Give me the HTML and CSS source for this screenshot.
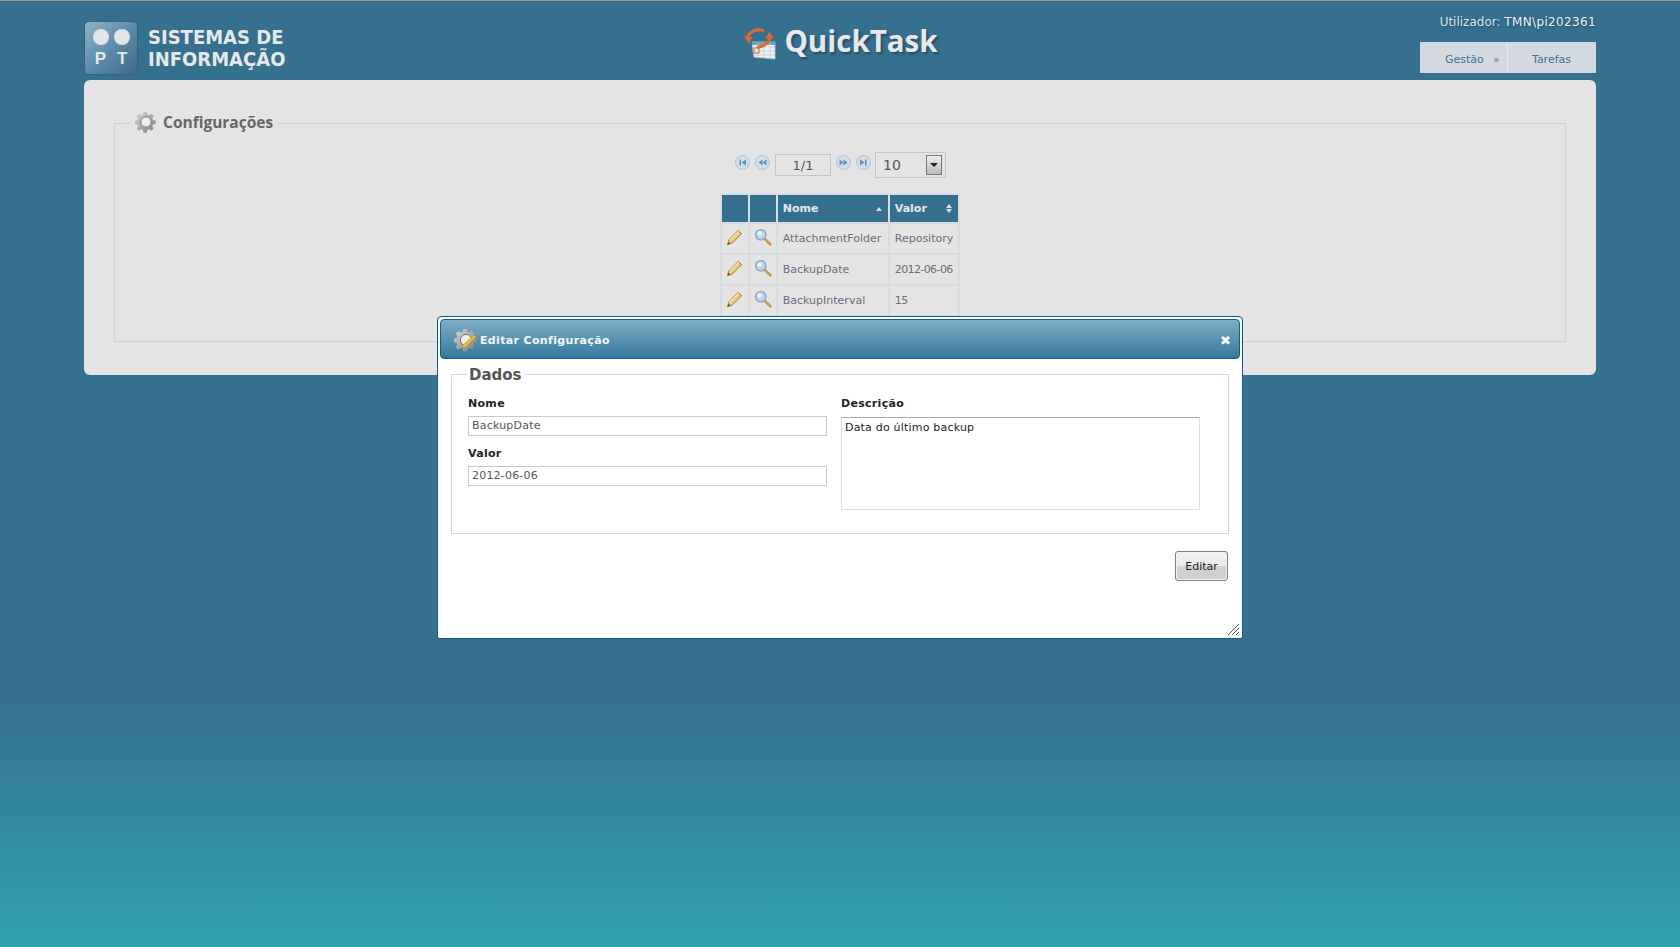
FILE: index.html
```html
<!DOCTYPE html>
<html lang="pt">
<head>
  <meta charset="UTF-8" />
  <title>QuickTask</title>
  <link rel="stylesheet" href="styles.css">
</head>
<body>
  <svg class="defs" width="0" height="0">
    <defs>
      <linearGradient id="gearFill" x1="0" y1="0" x2="1" y2="1">
        <stop offset="0" stop-color="#d8d8d8"/>
        <stop offset="1" stop-color="#7d7d7d"/>
      </linearGradient>
      <symbol id="gear" viewBox="0 0 24 24">
        <path fill="url(#gearFill)" d="M10 1h4l.6 3 2.1.9 2.6-1.7 2.8 2.8-1.7 2.6.9 2.1 3 .6v4l-3 .6-.9 2.1 1.7 2.6-2.8 2.8-2.6-1.7-2.1.9-.6 3h-4l-.6-3-2.1-.9-2.6 1.7-2.8-2.8 1.7-2.6-.9-2.1-3-.6v-4l3-.6.9-2.1-1.7-2.6 2.8-2.8 2.6 1.7 2.1-.9z" transform="translate(12 12) scale(.92) translate(-13 -13)"/>
        <circle cx="12" cy="12" r="5.600" fill="#eee" stroke="#777" stroke-width="1"/>
      </symbol>
      <symbol id="pencil" viewBox="0 0 16 16">
        <path d="M1.500 14.500l1-4L11.500 1.500l3 3-9 9z" fill="#eccb84" stroke="#b98a45" stroke-width="1"/>
        <path d="M1.500 14.500l.7-2.800 2.100 2.100z" fill="#7a4a20"/>
        <path d="M3.500 10.500l8.500-8.500" stroke="#fbeebc" stroke-width="1"/>
      </symbol>
      <symbol id="lens" viewBox="0 0 16 16">
        <path d="M9.500 9.500l5 5" stroke="#c99a45" stroke-width="2.400" stroke-linecap="round"/>
        <circle cx="6" cy="6" r="4.600" fill="#bcd3ee" stroke="#8fa3c0" stroke-width="1.200"/>
        <circle cx="5" cy="4.800" r="2" fill="#eef4fb"/>
      </symbol>
      <symbol id="pg-first" viewBox="0 0 15 15">
        <circle cx="7.500" cy="7.500" r="7" fill="#d3deeb" stroke="#b3c1d3"/>
        <path d="M4.500 4.500h1.500v6H4.500zM11 4.500v6L6.500 7.500z" fill="#5d8fc3"/>
      </symbol>
      <symbol id="pg-prev" viewBox="0 0 15 15">
        <circle cx="7.500" cy="7.500" r="7" fill="#d3deeb" stroke="#b3c1d3"/>
        <path d="M7.500 4.500v6L3.500 7.500zM11.500 4.500v6L7.500 7.500z" fill="#5d8fc3"/>
      </symbol>
      <symbol id="pg-next" viewBox="0 0 15 15">
        <circle cx="7.500" cy="7.500" r="7" fill="#d3deeb" stroke="#b3c1d3"/>
        <path d="M3.500 4.500v6L7.500 7.500zM7.500 4.500v6L11.500 7.500z" fill="#5d8fc3"/>
      </symbol>
      <symbol id="pg-last" viewBox="0 0 15 15">
        <circle cx="7.500" cy="7.500" r="7" fill="#d3deeb" stroke="#b3c1d3"/>
        <path d="M4 4.500v6L8.500 7.500zM9 4.500h1.500v6H9z" fill="#5d8fc3"/>
      </symbol>
    </defs>
  </svg>

  <div class="page">
    <header class="top">
      <div class="brand">
        <div class="logo">
          <div class="logo-dots"><i></i><i></i></div>
          <div class="logo-letters"><span>P</span><span>T</span></div>
        </div>
        <div class="brand-name">SISTEMAS DE<br>INFORMAÇÃO</div>
      </div>
      <div class="app-title">
        <svg class="app-icon" viewBox="0 0 32 34" width="32" height="34">
          <path d="M8 16l23 0 0 17-21-2z" fill="#eef1f4" stroke="#b9c4cf" stroke-width=".8"/>
          <path d="M8 16l23 0 0 3-23 0z" fill="#6f9fc6"/>
          <path d="M8 21h23M8 25h23M9 29h22M14 17v15M20 17v15M26 17v15" stroke="#c6ced6" stroke-width=".8"/>
          <rect x="10" y="22" width="5" height="5" fill="none" stroke="#e2672e" stroke-width="1"/>
          <path d="M3 13C5 5 13 2 20 5" fill="none" stroke="#e2672e" stroke-width="3"/>
          <path d="M0 10l8 1-3 7z" fill="#e2672e"/>
          <path d="M26 11c0 5-6 10-13 10" fill="none" stroke="#e2672e" stroke-width="3"/>
          <path d="M21 13l4-7 5 6z" fill="#e2672e"/>
        </svg>
        <span>QuickTask</span>
      </div>
      <div class="user-area">
        <div class="user-line">Utilizador: <b>TMN\pi202361</b></div>
        <nav class="menu">
          <a class="menu-item first">Gestão <em>»</em></a>
          <a class="menu-item">Tarefas</a>
        </nav>
      </div>
    </header>

    <main class="panel">
      <fieldset class="box">
        <legend class="box-title">
          <svg width="22" height="24"><use href="#gear"/></svg>
          Configurações
        </legend>
        <div class="pager">
          <svg class="pg-btn" width="15" height="15"><use href="#pg-first"/></svg>
          <svg class="pg-btn" width="15" height="15"><use href="#pg-prev"/></svg>
          <span class="pg-num">1/1</span>
          <svg class="pg-btn" width="15" height="15"><use href="#pg-next"/></svg>
          <svg class="pg-btn" width="15" height="15"><use href="#pg-last"/></svg>
          <span class="pg-size">10<i class="pg-arrow"></i></span>
        </div>
        <table class="grid">
          <thead>
            <tr>
              <th class="ico"></th>
              <th class="ico"></th>
              <th class="c-name"><div class="th-in">Nome<i class="sort-up"></i></div></th>
              <th class="c-val"><div class="th-in">Valor<i class="sort-both"></i></div></th>
            </tr>
          </thead>
          <tbody>
            <tr>
              <td class="ico"><svg width="17" height="17"><use href="#pencil"/></svg></td>
              <td class="ico"><svg width="18" height="18"><use href="#lens"/></svg></td>
              <td>AttachmentFolder</td>
              <td>Repository</td>
            </tr>
            <tr>
              <td class="ico"><svg width="17" height="17"><use href="#pencil"/></svg></td>
              <td class="ico"><svg width="18" height="18"><use href="#lens"/></svg></td>
              <td>BackupDate</td>
              <td class="num">2012-06-06</td>
            </tr>
            <tr>
              <td class="ico"><svg width="17" height="17"><use href="#pencil"/></svg></td>
              <td class="ico"><svg width="18" height="18"><use href="#lens"/></svg></td>
              <td>BackupInterval</td>
              <td class="num">15</td>
            </tr>
          </tbody>
        </table>
      </fieldset>
    </main>
  </div>

  <div class="dialog">
    <div class="dialog-bar">
      <svg class="dialog-gear" width="24" height="24" viewBox="0 0 24 24">
        <use href="#gear"/>
        <path d="M8 20l1-3L20 7l2 2L12 19z" fill="#f0b93c" stroke="#b5852c" stroke-width=".5"/>
      </svg>
      <span class="dialog-title">Editar Configuração</span>
      <span class="dialog-close">&#10006;</span>
    </div>
    <div class="dialog-body">
      <fieldset class="data">
        <legend>Dados</legend>
        <div class="data-cols">
          <div class="data-col">
            <label>Nome</label>
            <div class="field">BackupDate</div>
            <label class="second">Valor</label>
            <div class="field">2012-06-06</div>
          </div>
          <div class="data-col">
            <label>Descrição</label>
            <div class="area">Data do último backup</div>
          </div>
        </div>
      </fieldset>
      <div class="actions"><button class="btn">Editar</button></div>
    </div>
    <svg class="grip" width="12" height="12" viewBox="0 0 12 12">
      <path d="M1 12L12 1M5 12l7-7M9 12l3-3" stroke="#555" stroke-width="1"/>
    </svg>
  </div>
</body>
</html>
```
FILE: styles.css
```css
* {
  box-sizing: border-box;
}

html, body {
  height: 100%;
  margin: 0;
}

body {
  position: relative;
  min-height: 947px;
  overflow: hidden;
  font-family: "DejaVu Sans", Verdana, sans-serif;
  font-size: 11px;
  color: #222;
  border-top: 1px solid #9a9a9a;
  background: linear-gradient(to bottom, #35708f 0, #35708f 700px, #309fae 930px, #309fae 100%);
}

.defs {
  position: absolute;
}

.page {
  width: 1512px;
  margin: 0 auto;
}

/* topo */
.top {
  display: flex;
  justify-content: space-between;
  height: 79px;
}

.brand {
  display: flex;
  width: 420px;
  padding-top: 20px;
}

.logo {
  width: 54px;
  height: 54px;
  padding-top: 7px;
  border-radius: 5px;
  border: 1px solid #3d6077;
  background: linear-gradient(135deg, #8fb3c9 0, #5b8cab 50%, #3f6a87 100%);
}

.logo-dots {
  display: flex;
  justify-content: center;
  gap: 5px;
}

.logo-dots i {
  width: 16px;
  height: 16px;
  border-radius: 50%;
  background: #e4e4e4;
}

.logo-letters {
  display: flex;
  justify-content: center;
  gap: 11px;
  margin-top: 4px;
  font: bold 17px/20px "Liberation Sans", sans-serif;
  color: #e8e8e8;
}

.brand-name {
  margin: 5px 0 0 10px;
  font: bold 20px/22px "DejaVu Sans", sans-serif;
  font-stretch: condensed;
  color: #e6e8e9;
}

.app-title {
  display: flex;
  align-items: flex-start;
  gap: 8px;
  padding-top: 25px;
  margin-left: 2px;
}

.app-title span {
  margin-top: -6px;
  font: bold 29.500px/42px "Open Sans", sans-serif;
  color: #e8e8e8;
  text-shadow: 2px 2px 2px #24506a;
}

.user-area {
  display: flex;
  flex-direction: column;
  align-items: flex-end;
  width: 420px;
}

.user-line {
  margin-top: 14px;
  font-size: 12px;
  line-height: 14px;
  color: #dfe6ea;
  text-shadow: 1px 1px 2px #1f4a62;
}

.user-line b {
  font-weight: normal;
  letter-spacing: .35px;
  color: #f2f2f2;
}

.menu {
  display: flex;
  margin-top: 13px;
  height: 31px;
}

.menu-item {
  width: 88px;
  padding-left: 24px;
  font-size: 11px;
  line-height: 35px;
  color: #3d7396;
  background: #d4d9df;
}

.menu-item.first {
  padding-left: 25px;
  border-right: 1px solid #e8ebee;
}

.menu-item em {
  margin-left: 6px;
  font-style: normal;
  font-size: 10px;
}

/* painel */
.panel {
  height: 295px;
  padding: 30px 30px 0;
  border-radius: 6px;
  background: #e4e4e4;
}

.box {
  height: 232px;
  margin: 0;
  padding: 0;
  border: 1px solid #c3d3e8;
}

.box-title {
  display: flex;
  align-items: center;
  gap: 6px;
  margin-left: 15px;
  padding: 0 5px 2px;
  font: bold 15.500px/24px "Open Sans", sans-serif;
  color: #666;
}

.pager {
  display: flex;
  justify-content: center;
  align-items: flex-start;
  gap: 5px;
  margin-top: 16px;
  padding-left: 1px;
}

.pg-btn {
  margin-top: 3px;
}

.pg-num {
  width: 56px;
  height: 22px;
  margin: 2px 0 0;
  border: 1px solid #c6c6c6;
  font-size: 13px;
  line-height: 22px;
  text-align: center;
  color: #555;
}

.pg-size {
  display: flex;
  justify-content: space-between;
  align-items: center;
  width: 71px;
  height: 26px;
  margin-left: -1px;
  padding: 0 3px 0 7px;
  border: 1px solid #c6c6c6;
  font-size: 14px;
  color: #555;
}

.pg-arrow {
  position: relative;
  width: 16px;
  height: 20px;
  border: 1px solid #777;
  background: linear-gradient(#eee, #bbb);
}

.pg-arrow::after {
  content: '';
  position: absolute;
  left: 3px;
  top: 7px;
  border: 4px solid transparent;
  border-top: 4px solid #222;
}

.grid {
  margin: 15px auto 0;
  border-collapse: separate;
  border-spacing: 2px;
  background: #d8dbe0;
  font-size: 11px;
}

.grid th {
  height: 27px;
  padding: 0 5px;
  text-align: left;
  font-size: 11px;
  font-weight: bold;
  color: #e4e9ec;
  background: #35708f;
}

.grid td {
  height: 29px;
  padding: 0 5px;
  color: #6a6e7a;
  background: #e4e4e4;
  white-space: nowrap;
}

.grid td.num {
  letter-spacing: -.6px;
}

.grid .ico {
  width: 26px;
  padding: 0;
  text-align: center;
}

.grid .ico svg {
  display: block;
  margin: 0 auto 3px;
}

.c-name {
  width: 110px;
}

.c-val {
  width: 68px;
}

.th-in {
  display: flex;
  justify-content: space-between;
  align-items: center;
}

.sort-up, .sort-both {
  position: relative;
  width: 7px;
  height: 9px;
}

.sort-up::before, .sort-both::before, .sort-both::after {
  content: '';
  position: absolute;
  left: 0;
  border: 3.500px solid transparent;
}

.sort-up::before {
  top: 0;
  border-bottom: 4px solid #d8e0e6;
}

.sort-both::before {
  top: -3px;
  border-bottom: 4px solid #d8e0e6;
}

.sort-both::after {
  top: 5px;
  border-top: 4px solid #d8e0e6;
}

/* dialogo */
.dialog {
  position: absolute;
  left: 437px;
  top: 315px;
  width: 806px;
  height: 323px;
  padding: 2px;
  border: 1px solid #0c5a85;
  border-radius: 4px 4px 2px 2px;
  background: #fff;
}

.dialog-bar {
  display: flex;
  align-items: center;
  height: 40px;
  padding: 2px 8px 0 13px;
  border: 1px solid #0f5f8a;
  border-radius: 4px;
  background: linear-gradient(#7faec5, #35789c);
}

.dialog-title {
  flex: 1;
  margin-left: 2px;
  font-size: 11px;
  font-weight: bold;
  letter-spacing: .35px;
  color: #f4f7f8;
}

.dialog-close {
  font-size: 13px;
  color: #fff;
}

.dialog-body {
  padding: 0 11px;
}

.data {
  height: 171px;
  margin: 4px 0 0;
  padding: 0 16px;
  border: 1px solid #c7daf5;
}

.data legend {
  margin-left: -1px;
  padding: 2px 2px 0;
  font-size: 15px;
  font-weight: bold;
  line-height: 20px;
  color: #555;
}

.data-cols {
  display: flex;
  gap: 14px;
  margin-top: 10px;
}

.data-col {
  width: 359px;
}

.data-col label {
  display: block;
  height: 18px;
  font-weight: bold;
  letter-spacing: .3px;
  line-height: 18px;
  color: #222;
}

.data-col label.second {
  margin-top: 9px;
}

.field {
  height: 20px;
  margin-top: 3px;
  padding-left: 3px;
  border: 1px solid #c9c9c9;
  letter-spacing: .2px;
  line-height: 18px;
  color: #555;
}

.area {
  height: 93px;
  margin-top: 4px;
  padding: 3px 3px;
  border: 1px solid #ddd;
  border-top-color: #aaa;
  letter-spacing: .2px;
  line-height: 14px;
  color: #222;
}

.actions {
  display: flex;
  justify-content: flex-end;
  margin-top: 17px;
  padding-right: 1px;
}

.btn {
  width: 53px;
  height: 30px;
  padding: 0;
  border: 1px solid #808080;
  border-radius: 3px;
  box-shadow: inset 0 0 0 1px #f2f2f2;
  font: 11px "DejaVu Sans", sans-serif;
  color: #222;
  background: linear-gradient(#f0f0f0 0, #eaeaea 48%, #d2d2d2 52%, #cfcfcf 100%);
}

.grip {
  position: absolute;
  right: 3px;
  bottom: 3px;
}
```
